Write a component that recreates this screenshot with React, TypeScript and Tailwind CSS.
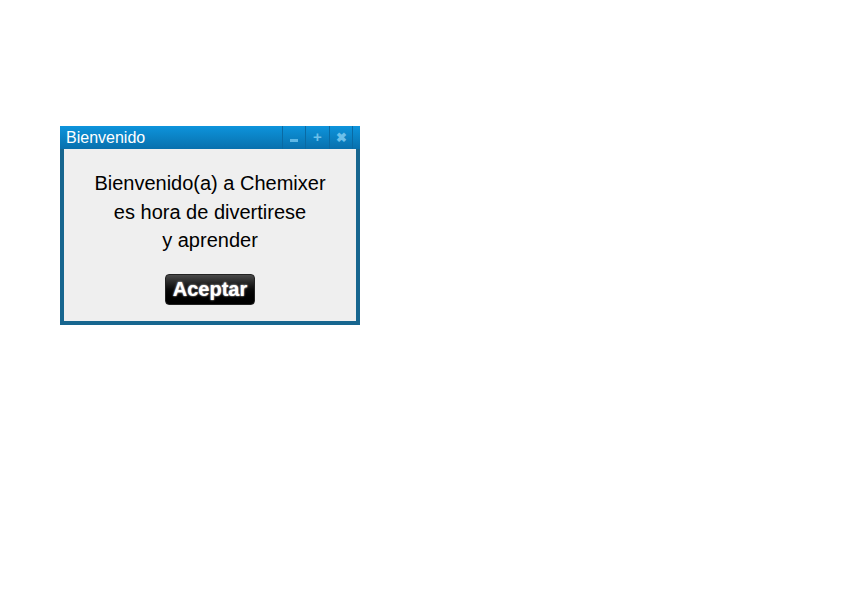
export default function App() {
  return (
    <div className="w-[868px] h-[607px] bg-white relative" style={{ fontFamily: '"Liberation Sans", Arial, sans-serif' }}>
      <div className="pt-[126px] pl-[60px]">
        <div className="w-[300px] h-[199px] bg-[#17668f] px-[4px] pb-[4px] flex flex-col">
          <div className="-mx-[4px] h-[23px] flex items-center bg-gradient-to-b from-[#0d94dc] to-[#0870ad] shrink-0">
            <span className="pl-[6px] text-white text-[16px] leading-none flex-1">Bienvenido</span>
            <div className="flex h-full pr-[7px]">
              <div className="w-[23px] h-full border-l border-[#0a6aa3] flex items-center justify-center">
                <div className="w-[8px] h-[3px] bg-[#5cb7e6] mt-[6px]" />
              </div>
              <div className="w-[24px] h-full border-l border-[#0a6aa3] flex items-center justify-center text-[#6cc0ea] font-bold text-[15px]">
                +
              </div>
              <div className="w-[24px] h-full border-l border-r border-[#0a6aa3] flex items-center justify-center text-[#6cc0ea] font-bold text-[13px]">
                ✖
              </div>
            </div>
          </div>
          <div className="flex-1 bg-[#efefef] flex flex-col items-center pt-[20px]">
            <p className="text-[20px] leading-[28.5px] text-black text-center">
              Bienvenido(a) a Chemixer
              <br />
              es hora de divertirese
              <br />
              y aprender
            </p>
            <button className="mt-[19px] w-[90px] h-[31px] rounded-[4px] bg-gradient-to-b from-[#4a4a4a] via-[#0a0a0a] to-black border border-[#222] text-white font-bold text-[20px] leading-none [text-shadow:0_0_2px_#fff]">
              Aceptar
            </button>
          </div>
        </div>
      </div>
    </div>
  );
}
